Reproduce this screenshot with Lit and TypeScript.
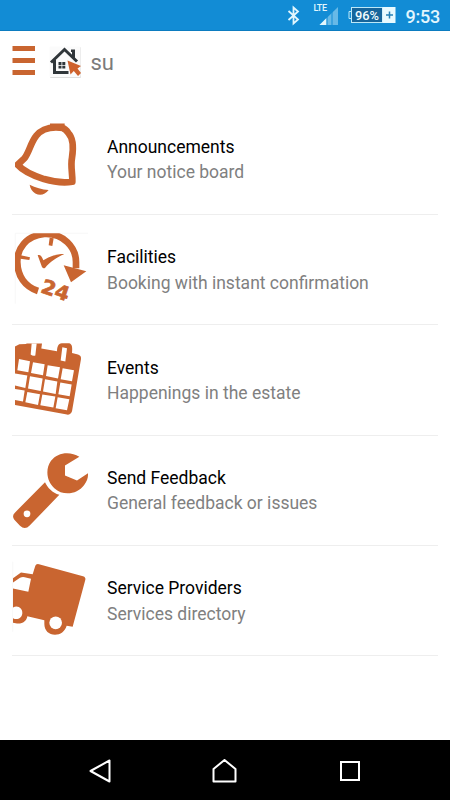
import { LitElement, html, svg, css } from "lit";
import { customElement } from "lit/decorators.js";

const bell = svg`
  <path fill="none" stroke="currentColor" stroke-width="20" stroke-linejoin="round" d="M190 53C155 48 126 53 108 77C92 97 87 127 73 144L53 163C66 178 95 194 132 206C159 214 190 218 217 214C218 191 211 167 216 142C221 110 221 85 205 68C200 60 195 55 187 53"/>
  <path fill="#fff" d="M36 120H45V190H36Z"/>
  <path fill="currentColor" d="M150 39H194V53H150ZM89 223C106 232 126 237 146 239C135 253 120 257 106 249C96 243 91 235 89 223Z"/>`;

const clock = svg`
  <path fill="none" stroke="#f4f4f4" stroke-width="2" d="M46 251V40H264"/>
  <svg x="45" y="40" width="225" height="215" viewBox="45 40 225 215">
    <path fill="none" stroke="currentColor" stroke-width="20" d="M114 213C74 200 53 167 52 128C50 87 78 47 133 42C190 39 228 82 228 126V145"/>
  </svg>
  <path fill="currentColor" d="M149 53L161 55L157 78L146 76ZM62 106L90 112L88 120L61 116ZM113 106C119 102 125 107 130 121C150 108 170 102 193 102C171 112 149 126 135 144C128 147 126 142 124 136ZM191 136L259 154L213 187Z"/>
  <text class="glyph" transform="translate(119 216) rotate(19)" textLength="86" lengthAdjust="spacingAndGlyphs">24</text>`;

const calendar = svg`
  <path fill="currentColor" d="M45 51L58 44L79 43V42H126L124 57L171 65C172 46 177 41 190 41H207C216 43 218 52 216 70L234 75Q244 78 243 88L216 245Q212 256 201 255L45 226Z"/>
  <path fill="#fff" d="M95 42H110L106 78Q98 80 92 75ZM187 53L201 56L196 96L182 93Z"/>
  <path fill="#fff" d="M57 88L90 95L85 128L52 122ZM99 98L134 104L129 137L93 130ZM143 107L180 113L174 147L138 139ZM188 116L222 122L216 155L182 149ZM45 132L82 138L76 175L45 168ZM90 140L128 147L122 184L84 177ZM135 149L172 156L167 193L129 186ZM181 159L215 165L209 200L175 194ZM45 178L74 183L69 216L45 211ZM82 187L120 194L114 226L76 218ZM127 195L166 201L160 234L121 227ZM173 203L208 209L201 242L167 236Z"/>`;

const wrench = svg`
  <path fill="currentColor" d="M238 50C211 32 172 36 153 62C135 88 140 122 163 144C190 169 232 162 252 135C261 123 265 112 264 99L231 121L195 106V76ZM135 126C143 143 157 157 178 164L89 256Q75 271 60 257L43 239Q34 226 46 216Z"/>
  <circle fill="#fff" cx="81" cy="221" r="10"/>`;

const truck = svg`
  <path fill="none" stroke="#f4f4f4" stroke-width="2" d="M38 36V246"/>
  <path fill="currentColor" d="M39 85L63 68L98 73L106 48Q108 41 117 43L249 79Q258 82 256 90L218 231L200 228C195 245 181 255 165 255C147 255 133 243 133 222V211L82 199C80 213 67 223 51 221L39 219Z"/>
  <path fill="#fff" d="M39 98L60 84Q67 80 74 82L93 87L85 126L39 116Z"/>
  <path fill="#fff" d="M39 173C54 165 68 176 67 190C66 205 51 212 39 205Z"/>
  <circle fill="#fff" cx="167" cy="219" r="19"/>`;

const entries = [
  { icon: bell, title: "Announcements", note: "Your notice board" },
  { icon: clock, title: "Facilities", note: "Booking with instant confirmation" },
  { icon: calendar, title: "Events", note: "Happenings in the estate" },
  { icon: wrench, title: "Send Feedback", note: "General feedback or issues" },
  { icon: truck, title: "Service Providers", note: "Services directory" },
];

@customElement("app-root")
export class AppRoot extends LitElement {
  static styles = css`
    :host {
      display: flex;
      flex-direction: column;
      height: 800px;
      background: #fff;
      font-family: Roboto, sans-serif;
      overflow: hidden;
    }
    svg { display: block; flex: none; }
    .status {
      height: 31px;
      flex: none;
      box-sizing: border-box;
      background: #128cd5;
      border-bottom: 1px solid #0c7cc0;
      display: flex;
      align-items: center;
      color: #e2f6fd;
    }
    .status svg { margin-left: 280px; }
    .time { margin-left: 6.5px; padding-top: 3px; font-size: 18px; line-height: 28px; font-weight: 500; letter-spacing: -0.2px; }
    .lte { font: 500 9px Roboto, sans-serif; fill: #e2f6fd; }
    .pct { font: 500 12px Roboto, sans-serif; fill: #f2fcff; }
    .header {
      height: 73.4px;
      flex: none;
      display: flex;
      align-items: flex-start;
      padding-left: 12px;
    }
    .name { margin: 17px 0 0 8.5px; font-size: 22px; line-height: 30px; color: #7b7b7b; }
    .list { flex: 1; }
    .row {
      height: 110.4px;
      box-sizing: border-box;
      margin: 0 12px;
      padding-top: 9.2px;
      border-bottom: 1px solid #eeeeee;
      display: flex;
      align-items: flex-start;
      color: #c96530;
    }
    .text { margin: 21.2px 0 0 17px; font-size: 17.5px; line-height: 25.4px; white-space: nowrap; }
    .title { color: #000; }
    .note { color: #808080; }
    .glyph { font: 700 59px "DejaVu Sans", sans-serif; fill: #c96530; stroke: #c96530; stroke-width: 2; }
    .nav {
      height: 60px;
      flex: none;
      background: #000;
      display: flex;
      justify-content: space-between;
      align-items: center;
      padding: 6px 87px 0 86px;
      box-sizing: border-box;
    }
  `;

  render() {
    return html`
      <div class="status">
        <svg width="119" height="30" viewBox="280 0 119 30" fill="none">
          <path stroke="#e2f6fd" stroke-width="1.8" d="M288.5 11L298 19.5L293.5 23.5V7.5L298 11.5L288.5 20"/>
          <text class="lte" x="313.5" y="10.5" textLength="13.5">LTE</text>
          <path fill="#67b9e7" d="M338 7V25H319.500Z"/>
          <path fill="#e2f6fd" d="M326.500 18V25H319.500Z"/>
          <path stroke="#128cd5" stroke-width="1" d="M327 12V25M332 8V25"/>
          <rect x="351.500" y="7.500" width="31" height="15" fill="#17659b" stroke="#bce8f8"/>
          <path stroke="#bce8f8" d="M351.500 11.500H349V18.500H351.500"/>
          <text class="pct" x="355" y="19.500" textLength="24" lengthAdjust="spacingAndGlyphs">96%</text>
          <rect x="382.500" y="7" width="13" height="16" fill="#e9faff"/>
          <path stroke="#2681b6" stroke-width="1.500" d="M386 15H393M389.500 11.500V18.500"/>
        </svg>
        <span class="time">9:53</span>
      </div>
      <div class="header">
        <svg width="70" height="60" viewBox="12 31 70 60">
          <path fill="#c96530" d="M12.500 46H35V51H12.500ZM12.500 58H35V63H12.500ZM12.500 70H35V75H12.500Z"/>
          <rect x="50" y="47" width="31" height="31" rx="1" fill="#dedede"/>
          <rect x="49.500" y="46.500" width="31" height="30.500" rx="1" fill="#fbfbfb"/>
          <path fill="none" stroke="#30363a" stroke-width="3" d="M51 62.500L64.500 49.500L77 61.500M73.500 58V50.500M54.500 60V72.500H68.500"/>
          <path fill="#30363a" d="M71 49.500H75V52H71ZM58.500 62H61.500V65H58.500ZM62.300 62H65.300V65H62.300ZM58.500 65.700H61.500V68.500H58.500ZM62.300 65.700H65.300V68.500H62.300Z"/>
          <path fill="#cf622d" d="M67.500 60.500L81 66L77.500 68.500L81 73L78 76L73.800 71L70.500 74.500Z"/>
        </svg>
        <span class="name">su</span>
      </div>
      <div class="list">
        ${entries.map(
          (e, i) => html`
            <div class="row">
              <svg width="78" height="90" viewBox="36 ${10.8 + 1.2 * i} 234 270">${e.icon}</svg>
              <div class="text">
                <div class="title">${e.title}</div>
                <div class="note">${e.note}</div>
              </div>
            </div>
          `
        )}
      </div>
      <div class="nav">
        <svg width="26" height="28" viewBox="0 0 26 28"><path fill="none" stroke="#fff" stroke-width="2" stroke-linejoin="round" d="M4.500 12L23.500 1.500V22.500Z"/></svg>
        <svg width="26" height="28" viewBox="0 0 26 28"><path fill="none" stroke="#fff" stroke-width="2" stroke-linejoin="round" d="M1.500 22.500V10L12.500 1L23.500 10V22.500Z"/></svg>
        <svg width="26" height="28" viewBox="0 0 26 28"><rect x="4" y="3" width="18" height="18" fill="none" stroke="#fff" stroke-width="2"/></svg>
      </div>
    `;
  }
}
